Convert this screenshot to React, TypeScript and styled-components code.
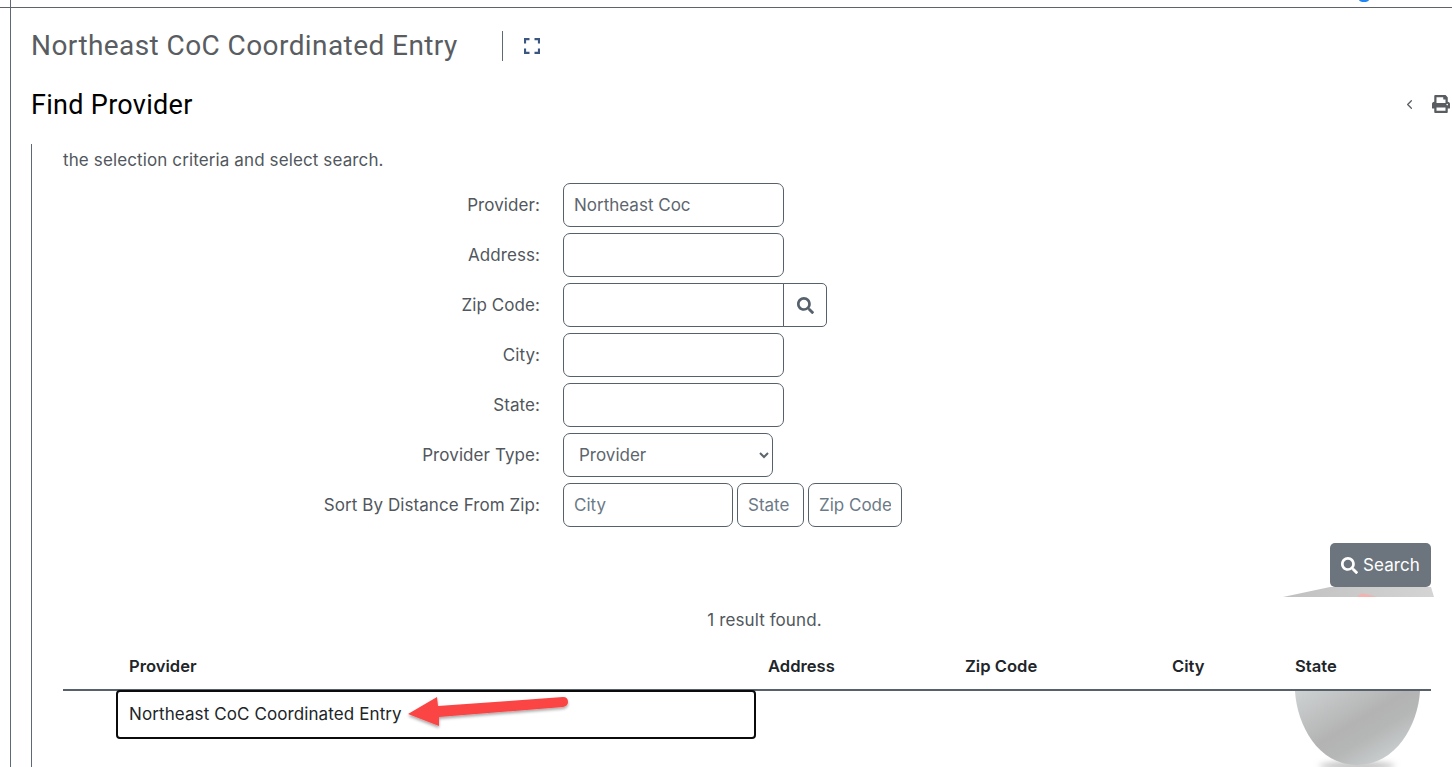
import React from "react";
import styled, { createGlobalStyle } from "styled-components";
import { FaSearch, FaPrint } from "react-icons/fa";
import { ChevronLeft } from "lucide-react";

const Global = createGlobalStyle`
  html, body { margin: 0; padding: 0; background: #fff; }
  body { font-family: Inter, "Liberation Sans", sans-serif; color: #51575d; overflow: hidden; }
`;

const Page = styled.div`
  position: relative;
  width: 1452px;
  height: 767px;
  overflow: hidden;
  background: linear-gradient(#5f6973, #5f6973) 10px 0 / 1px 100% no-repeat;
`;

const TopRule = styled.div`
  margin-top: 7px;
  height: 1px;
  background: #5f6468;
`;

const Main = styled.main`
  padding: 0 21px 0 31px;
`;

const TitleRow = styled.header`
  display: flex;
  align-items: center;
  height: 30px;
  margin-top: 23px;
`;

const Title = styled.h1`
  margin: 0;
  width: 471px;
  font: 400 28px/30px Roboto, sans-serif;
  letter-spacing: 0.42px;
  color: #595d61;
  white-space: nowrap;
`;

const ExpandButton = styled.div`
  display: flex;
  align-items: center;
  height: 30px;
  padding-left: 21px;
  border-left: 1px solid #5f6973;
`;

const SubRow = styled.div`
  display: flex;
  align-items: center;
  justify-content: space-between;
  height: 30px;
  margin-top: 29px;
  margin-right: -19px;
`;

const SubTitle = styled.h2`
  margin: 0;
  font: 400 27px/30px Roboto, sans-serif;
  letter-spacing: 0.3px;
  color: #000;
`;

const Tools = styled.div`
  display: flex;
  align-items: center;
  gap: 15px;
  margin-bottom: 2px;
  color: #595d61;
`;

const Panel = styled.section`
  margin-top: 24px;
  height: 623px;
  padding: 6px 0 0 31px;
  border-left: 1px solid #5f6973;
`;

const Intro = styled.p`
  margin: 0;
  font-size: 17px;
  line-height: 20px;
  letter-spacing: 0.12px;
  color: #51575d;
`;

const Form = styled.form`
  display: grid;
  grid-template-columns: 477px auto;
  column-gap: 23px;
  row-gap: 6px;
  margin-top: 13px;
  justify-content: start;
`;

const Label = styled.label`
  text-align: right;
  align-self: center;
  font-size: 17px;
  letter-spacing: 0.08px;
  color: #51575d;
`;

const Fields = styled.div`
  display: flex;
  height: 44px;
  gap: 4px;
`;

const Input = styled.input<{ $w: number }>`
  box-sizing: border-box;
  width: ${(p) => p.$w}px;
  height: 44px;
  padding: 0 10px;
  border: 1px solid #56616c;
  border-radius: 7px;
  background: #fff;
  font: 400 17px Inter, sans-serif;
  color: #5d666e;
  outline: none;
  &::placeholder { color: #6b7a87; opacity: 1; }
`;

const JoinedInput = styled(Input)`
  border-radius: 7px 0 0 7px;
`;

const AddonButton = styled.span`
  display: flex;
  align-items: center;
  justify-content: center;
  box-sizing: border-box;
  width: 44px;
  height: 44px;
  margin-left: -5px;
  border: 1px solid #56616c;
  border-radius: 0 5px 5px 0;
  color: #56616c;
`;

const Select = styled.select`
  box-sizing: border-box;
  width: 210px;
  height: 44px;
  padding: 0 0 0 11px;
  border: 1px solid #56616c;
  border-radius: 7px;
  background: #fff;
  font: 400 17px Inter, sans-serif;
  color: #5d666e;
`;

const ActionRow = styled.div`
  display: flex;
  justify-content: flex-end;
  margin-top: 16px;
`;

const SearchButton = styled.button`
  display: flex;
  align-items: center;
  gap: 5px;
  box-sizing: border-box;
  width: 101px;
  height: 44px;
  padding: 0 0 0 11px;
  border: 0;
  border-radius: 5px;
  background: #6c757d;
  color: #fff;
  font: 400 17px Inter, sans-serif;
  letter-spacing: 0.1px;
`;

const ResultCount = styled.div`
  margin-top: 23px;
  padding-left: 35px;
  text-align: center;
  font-size: 17px;
  line-height: 20px;
  letter-spacing: 0.1px;
  color: #51575d;
`;

const HeaderRow = styled.div`
  display: grid;
  grid-template-columns: 66px 639px 197px 207px 123px 1fr;
  height: 55px;
  margin-top: 6px;
  padding-top: 7px;
  align-items: center;
  border-bottom: 2px solid #56616c;
  box-sizing: border-box;
`;

const HeadCell = styled.div`
  font-size: 16.6px;
  font-weight: 600;
  color: #212529;
`;

const ResultRow = styled.div`
  display: flex;
  align-items: center;
  box-sizing: border-box;
  width: 640px;
  height: 49px;
  margin: -1px 0 0 53px;
  padding: 0 0 2px 11px;
  border: 2px solid #0b0b0b;
  border-radius: 4px;
  font-size: 17px;
  letter-spacing: 0.1px;
  color: #212529;
`;

const Decor = styled.svg`
  position: absolute;
  left: 0;
  top: 0;
  pointer-events: none;
`;

const Front = styled.div`
  position: relative;
`;

export default function App() {
  return (
    <Page>
      <Global />
      <TopRule />
      <Decor width="1452" height="767" viewBox="0 0 1452 767">
        <defs>
          <linearGradient id="egg" x1="0" y1="0" x2="1" y2="1">
            <stop offset="0%" stopColor="#ced2d3" />
            <stop offset="45%" stopColor="#b3b3b3" />
            <stop offset="60%" stopColor="#b5b6b6" />
            <stop offset="85%" stopColor="#cbd0d1" />
          </linearGradient>
          <linearGradient id="wedge" x1="0" x2="1" y1="0" y2="0">
            <stop offset="0%" stopColor="#c0c0c0" />
            <stop offset="100%" stopColor="#d4d4d4" />
          </linearGradient>
          <filter id="soft" x="-20%" y="-20%" width="140%" height="140%">
            <feGaussianBlur stdDeviation="0.7" />
          </filter>
          <filter id="softer" x="-30%" y="-100%" width="160%" height="300%">
            <feGaussianBlur stdDeviation="3" />
          </filter>
        </defs>
        <path d="M1359 0 H1369 Q1368 2 1364 2 Q1360 2 1359 0 Z" fill="#1f86f2" />
        <path d="M1283 597 L1330 587 L1431 587 L1434 597 Z" fill="url(#wedge)" />
        <path d="M1357 597 Q1361 592 1366 594 L1377 597 Z" fill="#f2b2b0" />
        <ellipse cx="1357" cy="766" rx="38" ry="4" fill="#bdbdbd" filter="url(#softer)" />
        <path
          d="M1295 691 C1297 725 1318 765 1357 765 C1396 765 1418 725 1420 691 Z"
          fill="url(#egg)"
          filter="url(#soft)"
        />
      </Decor>
      <Front>
        <Main>
          <TitleRow>
            <Title>Northeast CoC Coordinated Entry</Title>
            <ExpandButton>
              <svg width="16" height="16" viewBox="0 0 16 16" fill="none" stroke="#3b5680" strokeWidth="2.2">
                <path d="M1 5.5V1.2H5.5M10.5 1.2H15V5.5M15 10.5V14.8H10.5M5.5 14.8H1V10.5" />
              </svg>
            </ExpandButton>
          </TitleRow>
          <SubRow>
            <SubTitle>Find Provider</SubTitle>
            <Tools>
              <ChevronLeft size={15} strokeWidth={2} />
              <FaPrint size={18} />
            </Tools>
          </SubRow>
          <Panel>
            <Intro>the selection criteria and select search.</Intro>
            <Form>
              <Label>Provider:</Label>
              <Fields><Input $w={221} defaultValue="Northeast Coc" /></Fields>
              <Label>Address:</Label>
              <Fields><Input $w={221} /></Fields>
              <Label>Zip Code:</Label>
              <Fields>
                <JoinedInput $w={221} />
                <AddonButton><FaSearch size={17} /></AddonButton>
              </Fields>
              <Label>City:</Label>
              <Fields><Input $w={221} /></Fields>
              <Label>State:</Label>
              <Fields><Input $w={221} /></Fields>
              <Label>Provider Type:</Label>
              <Fields>
                <Select defaultValue="Provider"><option>Provider</option></Select>
              </Fields>
              <Label>Sort By Distance From Zip:</Label>
              <Fields>
                <Input $w={170} placeholder="City" />
                <Input $w={67} placeholder="State" />
                <Input $w={94} placeholder="Zip Code" />
              </Fields>
            </Form>
            <ActionRow>
              <SearchButton type="button"><FaSearch size={17} />Search</SearchButton>
            </ActionRow>
            <ResultCount>1 result found.</ResultCount>
            <HeaderRow>
              <span />
              <HeadCell>Provider</HeadCell>
              <HeadCell>Address</HeadCell>
              <HeadCell>Zip Code</HeadCell>
              <HeadCell>City</HeadCell>
              <HeadCell>State</HeadCell>
            </HeaderRow>
            <ResultRow>Northeast CoC Coordinated Entry</ResultRow>
          </Panel>
        </Main>
      </Front>
      <Decor width="1452" height="767" viewBox="0 0 1452 767">
        <defs>
          <filter id="arrowShadow" x="-10%" y="-30%" width="120%" height="170%">
            <feDropShadow dx="0" dy="2" stdDeviation="1.5" floodColor="#000" floodOpacity="0.35" />
          </filter>
        </defs>
        <path
          d="M408 714 L437 697 L438 706 L563 697 Q568 697 568 702 Q568 706 563 707 L439 717 L439 726 Z"
          fill="#fb4444"
          filter="url(#arrowShadow)"
        />
      </Decor>
    </Page>
  );
}
